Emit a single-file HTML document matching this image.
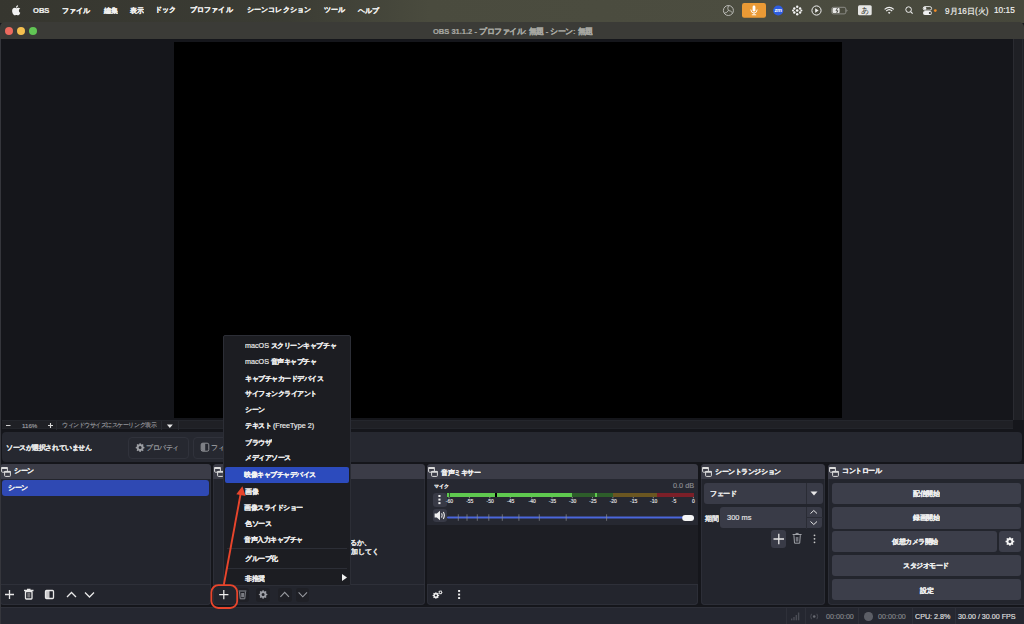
<!DOCTYPE html>
<html lang="ja"><head><meta charset="utf-8">
<style>
*{box-sizing:border-box;margin:0;padding:0}
html,body{width:1024px;height:624px;overflow:hidden;background:#15161b;font-family:"Liberation Sans",sans-serif;color:#e6e6e6}
.a{position:absolute}
.T{position:absolute;white-space:nowrap;line-height:1;font-size:20px;transform-origin:0 0}
.dock{position:absolute;background:#23252d;border-radius:4px;overflow:hidden;box-shadow:inset 0 0 0 1px #2c2e37}
.dh{position:absolute;left:0;top:0;right:0;height:15px;background:#3b3c47}
.btn{position:absolute;background:#3c3e4a;border-radius:3px}
.ib{position:absolute;background:#2c2e37;border-radius:3px}
.sep{position:absolute;background:#282a30}
</style></head><body>
<div class="a" style="left:0;top:0;width:1024px;height:23px;background:linear-gradient(90deg,#36362f 0%,#3b3c34 28%,#4a4b3e 42%,#4c4d40 75%,#46473b 100%)"></div>
<svg class="a" style="left:12px;top:5px" width="9" height="11" viewBox="0 0 170 200"><path fill="#f2f2f2" d="M150 68c-1 1-20 12-20 36 0 28 25 38 26 38 0 1-4 14-13 27-8 11-16 23-29 23s-16-8-31-8c-15 0-20 8-32 8s-21-11-30-24C10 153 2 128 2 105c0-38 25-58 49-58 13 0 24 9 32 9 8 0 20-9 35-9 6 0 26 1 39 21zM104 33c6-7 11-17 11-28 0-1 0-3-1-4-10 0-22 7-29 15-6 6-11 17-11 27 0 2 0 3 1 4h3c9 0 20-6 26-14z"/></svg>
<svg class="a" style="left:715px;top:0" width="230" height="22" viewBox="715 0 230 22">
<circle cx="728.4" cy="10.5" r="5" fill="none" stroke="#c4c4c0" stroke-width="0.9"/>
<g fill="none" stroke="#c4c4c0" stroke-width="0.85"><path d="M728.4 10.5Q727 8.3 728.6 5.6"/><path d="M728.4 10.5Q731 10.6 732.6 13"/><path d="M728.4 10.5Q727.3 12.8 724.3 13.2"/></g>
<rect x="742" y="3" width="24" height="14.7" rx="2.2" fill="#eb9a35"/>
<rect x="752.6" y="5.6" width="2.8" height="6" rx="1.4" fill="#fff"/>
<path d="M750.8 9.5Q751 13 754 13Q757 13 757.2 9.5M754 13V14.8M751.8 14.8H756.2" stroke="#fff" stroke-width="0.9" fill="none"/>
<circle cx="778.2" cy="10.5" r="5.1" fill="#2e5de0"/>
<text x="778.2" y="12.4" font-size="5.6" font-family="Liberation Sans" font-weight="bold" fill="#fff" text-anchor="middle" letter-spacing="-0.3">zm</text>
<g fill="#f4f4f4"><circle cx="797.2" cy="10.5" r="1.3"/><circle cx="794.3" cy="8.5" r="1.2"/><circle cx="800.1" cy="8.5" r="1.2"/><circle cx="794.3" cy="12.5" r="1.2"/><circle cx="800.1" cy="12.5" r="1.2"/><circle cx="797.2" cy="6.8" r="1.2"/><circle cx="797.2" cy="14.2" r="1.2"/><circle cx="793" cy="10.5" r="1"/><circle cx="801.4" cy="10.5" r="1"/></g>
<circle cx="816.5" cy="10.5" r="4.6" fill="none" stroke="#f0f0f0" stroke-width="1"/>
<path d="M815.2 8.3V12.7L818.6 10.5Z" fill="#f0f0f0"/>
<rect x="831.8" y="7.3" width="14" height="6.6" rx="1.6" fill="none" stroke="#9c9c98" stroke-width="0.8"/>
<rect x="832.6" y="8.1" width="7" height="5" rx="0.8" fill="#e8e8e6"/>
<path d="M846.5 9.2V12L847.6 10.6Z" fill="#9c9c98"/>
<path d="M837.5 8L836 10.8H838L836.6 13" stroke="#33332e" stroke-width="0.8" fill="none"/>
<rect x="858" y="5.3" width="13.7" height="10" rx="1.5" fill="#e6e6e4"/>
<text x="864.85" y="13.3" font-size="8" fill="#33332e" text-anchor="middle">あ</text>
<path d="M884.6 9.4Q889.2 5.2 893.8 9.4" stroke="#f0f0f0" stroke-width="1.1" fill="none"/>
<path d="M886.2 11Q889.2 8.3 892.2 11" stroke="#f0f0f0" stroke-width="1.1" fill="none"/>
<path d="M887.9 12.6Q889.2 11.4 890.5 12.6L889.2 14Z" fill="#f0f0f0"/>
<circle cx="908.6" cy="9.6" r="2.8" fill="none" stroke="#f0f0f0" stroke-width="1"/>
<path d="M910.6 11.6L912.6 13.6" stroke="#f0f0f0" stroke-width="1.2"/>
<rect x="923.2" y="6.6" width="8.4" height="3.6" rx="1.8" fill="none" stroke="#f0f0f0" stroke-width="0.9"/>
<circle cx="925" cy="8.4" r="1.3" fill="#f0f0f0"/>
<rect x="923" y="11.1" width="8.8" height="3.8" rx="1.9" fill="#f0f0f0"/>
<circle cx="929.9" cy="13" r="1.1" fill="#33332e"/>
<circle cx="935.3" cy="10.6" r="1.4" fill="#f08c28"/>
</svg>
<div class="T" style="left:32.54px;top:6.57px;transform:scale(0.3791);font-weight:bold;color:#f0f0ee;-webkit-text-stroke:0.55px #f0f0ee">OBS</div>
<div class="T" style="left:61.80px;top:6.53px;transform:scale(0.3550);font-weight:bold;color:#f0f0ee;-webkit-text-stroke:0.55px #f0f0ee">ファイル</div>
<div class="T" style="left:104.20px;top:6.78px;transform:scale(0.3400);font-weight:bold;color:#f0f0ee;-webkit-text-stroke:0.55px #f0f0ee">編集</div>
<div class="T" style="left:130.00px;top:6.78px;transform:scale(0.3400);font-weight:bold;color:#f0f0ee;-webkit-text-stroke:0.55px #f0f0ee">表示</div>
<div class="T" style="left:154.68px;top:6.23px;transform:scale(0.3600);font-weight:bold;color:#f0f0ee;-webkit-text-stroke:0.55px #f0f0ee">ドック</div>
<div class="T" style="left:190.00px;top:6.23px;transform:scale(0.3550);font-weight:bold;color:#f0f0ee;-webkit-text-stroke:0.55px #f0f0ee">プロファイル</div>
<div class="T" style="left:246.98px;top:6.23px;transform:scale(0.3550);font-weight:bold;color:#f0f0ee;-webkit-text-stroke:0.55px #f0f0ee">シーンコレクション</div>
<div class="T" style="left:324.00px;top:5.83px;transform:scale(0.3600);font-weight:bold;color:#f0f0ee;-webkit-text-stroke:0.55px #f0f0ee">ツール</div>
<div class="T" style="left:358.00px;top:6.83px;transform:scale(0.3550);font-weight:bold;color:#f0f0ee;-webkit-text-stroke:0.55px #f0f0ee">ヘルプ</div>
<div class="T" style="left:945.00px;top:6.88px;transform:scale(0.4076);font-weight:normal;color:#f0f0ee;-webkit-text-stroke:0.4px #f0f0ee">9月16日(火)</div>
<div class="T" style="left:994.30px;top:5.90px;transform:scale(0.4157);font-weight:normal;color:#f0f0ee;-webkit-text-stroke:0.4px #f0f0ee">10:15</div>
<div class="a" style="left:0;top:22px;width:1024px;height:17px;background:#3b3b37;border-radius:5px 5px 0 0"></div>
<div class="a" style="left:4.5px;top:26.5px;width:8px;height:8px;border-radius:50%;background:#ec6a5e"></div>
<div class="a" style="left:16.5px;top:26.5px;width:8px;height:8px;border-radius:50%;background:#f4bf4f"></div>
<div class="a" style="left:28.5px;top:26.5px;width:8px;height:8px;border-radius:50%;background:#61c554"></div>
<div class="T" style="left:432.61px;top:27.78px;transform:scale(0.3761);font-weight:bold;color:#a8a8a2;-webkit-text-stroke:0.55px #a8a8a2">OBS 31.1.2 - プロファイル: 無題 - シーン: 無題</div>
<div class="a" style="left:174px;top:42px;width:667.8px;height:375.7px;background:#000"></div>
<div class="a" style="left:1012.8px;top:39px;width:11.2px;height:381px;background:#1f2025;border-left:1px solid #2a2b31"></div><div class="a" style="left:1021.8px;top:39px;width:1px;height:381px;background:#282a30"></div>
<div class="a" style="left:2px;top:419.9px;width:1011px;height:9.6px;background:#1f2025;border-top:1.5px solid #24262c;border-bottom:1.5px solid #23252b"></div>
<svg class="a" style="left:0;top:418px" width="200" height="14" viewBox="0 418 200 14">
<path d="M6 425.5H10.5" stroke="#d0d0d0" stroke-width="1"/>
<path d="M48 425.5H53M50.5 423V428" stroke="#d8d8d8" stroke-width="1.1"/>
<path d="M166.9 424.5H172.8L169.85 428Z" fill="#e8e8e8"/>
</svg>
<div class="sep" style="left:56px;top:421px;width:1px;height:9px"></div>
<div class="sep" style="left:161px;top:421px;width:1px;height:9px"></div>
<div class="sep" style="left:177.5px;top:421px;width:1px;height:9px"></div>
<div class="a" style="left:2px;top:432.4px;width:1020px;height:29.2px;background:#262830;border-radius:4px"></div>
<div class="a" style="left:127.5px;top:436.5px;width:61.5px;height:22px;border:1px solid #30323b;border-radius:4px"></div>
<div class="a" style="left:192.5px;top:436.5px;width:61.5px;height:22px;border:1px solid #30323b;border-radius:4px"></div>
<svg class="a" style="left:130px;top:438px" width="90" height="18" viewBox="130 438 90 18">
<path fill-rule="evenodd" fill="#9c9ea3" d="M143.50 446.77 L144.45 446.96 L144.45 448.24 L143.50 448.43 L143.09 449.42 L143.63 450.23 L142.73 451.13 L141.92 450.59 L140.93 451.00 L140.74 451.95 L139.46 451.95 L139.27 451.00 L138.28 450.59 L137.47 451.13 L136.57 450.23 L137.11 449.42 L136.70 448.43 L135.75 448.24 L135.75 446.96 L136.70 446.77 L137.11 445.78 L136.57 444.97 L137.47 444.07 L138.28 444.61 L139.27 444.20 L139.46 443.25 L140.74 443.25 L140.93 444.20 L141.92 444.61 L142.73 444.07 L143.63 444.97 L143.09 445.78Z M138.60 447.60 a1.50 1.50 0 1 0 3.00 0 a1.50 1.50 0 1 0 -3.00 0Z"/>
<rect x="201.2" y="443.2" width="7.6" height="8" rx="1.6" fill="none" stroke="#9c9ea3" stroke-width="0.9"/>
<rect x="201.6" y="443.6" width="3.6" height="7.2" fill="#9c9ea3" opacity="0.75"/>
</svg>
<div class="T" style="left:22.29px;top:422.99px;transform:scale(0.3085);font-weight:normal;color:#a0a1a6;-webkit-text-stroke:0.4px #a0a1a6">116%</div>
<div class="T" style="left:62.20px;top:422.38px;transform:scale(0.2768);font-weight:normal;color:#a0a1a6;-webkit-text-stroke:0.4px #a0a1a6">ウィンドウサイズにスケーリング表示</div>
<div class="T" style="left:5.82px;top:443.92px;transform:scale(0.3290);font-weight:bold;color:#e8e8e8;-webkit-text-stroke:0.55px #e8e8e8">ソースが選択されていません</div>
<div class="T" style="left:146.25px;top:444.44px;transform:scale(0.3264);font-weight:normal;color:#a8aaae;-webkit-text-stroke:0.4px #a8aaae">プロパティ</div>
<div class="T" style="left:211.00px;top:444.03px;transform:scale(0.3352);font-weight:normal;color:#a8aaae;-webkit-text-stroke:0.4px #a8aaae">フィルタ</div>
<div class="dock" style="left:0;top:464px;width:211px;height:141px">
  <div class="dh"></div>
  <div class="a" style="left:2px;top:15.5px;width:207px;height:16.5px;background:#2f49b3;border-radius:3px"></div>
  <div class="a" style="left:0;top:120px;width:211px;height:1px;background:#2e3039"></div>
</div>
<div class="dock" style="left:213px;top:464px;width:212px;height:141px">
  <div class="dh"></div>
  <div class="a" style="left:0;top:120px;width:212px;height:1px;background:#2e3039"></div>
</div>
<div class="dock" style="left:427px;top:464px;width:271px;height:141px">
  <div class="dh"></div>
  <div class="a" style="left:0;top:15px;width:271px;height:46px;background:#262831"></div>
  <div class="a" style="left:0;top:61px;width:271px;height:60px;background:#1d1e24"></div>
  <div class="a" style="left:0;top:120px;width:271px;height:1px;background:#2e3039"></div>
</div>
<div class="dock" style="left:701px;top:464px;width:124px;height:141px">
  <div class="dh"></div>
</div>
<div class="dock" style="left:828px;top:464px;width:200px;height:141px">
  <div class="dh"></div>
</div>
<svg class="a" style="left:0px;top:466px" width="12" height="12" viewBox="0 0 12 12"><rect x="1.6" y="1.6" width="5.8" height="4.6" rx="0.8" fill="none" stroke="#dcdcdc" stroke-width="1"/><rect x="1.1" y="1.1" width="6.8" height="1.9" rx="0.8" fill="#dcdcdc"/><rect x="4.6" y="5.4" width="5.8" height="5" rx="0.8" fill="#3b3c47" stroke="#dcdcdc" stroke-width="1"/><rect x="4.1" y="4.9" width="6.8" height="1.9" rx="0.8" fill="#dcdcdc"/></svg><svg class="a" style="left:213px;top:466px" width="12" height="12" viewBox="0 0 12 12"><rect x="1.6" y="1.6" width="5.8" height="4.6" rx="0.8" fill="none" stroke="#dcdcdc" stroke-width="1"/><rect x="1.1" y="1.1" width="6.8" height="1.9" rx="0.8" fill="#dcdcdc"/><rect x="4.6" y="5.4" width="5.8" height="5" rx="0.8" fill="#3b3c47" stroke="#dcdcdc" stroke-width="1"/><rect x="4.1" y="4.9" width="6.8" height="1.9" rx="0.8" fill="#dcdcdc"/></svg><svg class="a" style="left:427px;top:466px" width="12" height="12" viewBox="0 0 12 12"><rect x="1.6" y="1.6" width="5.8" height="4.6" rx="0.8" fill="none" stroke="#dcdcdc" stroke-width="1"/><rect x="1.1" y="1.1" width="6.8" height="1.9" rx="0.8" fill="#dcdcdc"/><rect x="4.6" y="5.4" width="5.8" height="5" rx="0.8" fill="#3b3c47" stroke="#dcdcdc" stroke-width="1"/><rect x="4.1" y="4.9" width="6.8" height="1.9" rx="0.8" fill="#dcdcdc"/></svg><svg class="a" style="left:701px;top:466px" width="12" height="12" viewBox="0 0 12 12"><rect x="1.6" y="1.6" width="5.8" height="4.6" rx="0.8" fill="none" stroke="#dcdcdc" stroke-width="1"/><rect x="1.1" y="1.1" width="6.8" height="1.9" rx="0.8" fill="#dcdcdc"/><rect x="4.6" y="5.4" width="5.8" height="5" rx="0.8" fill="#3b3c47" stroke="#dcdcdc" stroke-width="1"/><rect x="4.1" y="4.9" width="6.8" height="1.9" rx="0.8" fill="#dcdcdc"/></svg><svg class="a" style="left:828px;top:466px" width="12" height="12" viewBox="0 0 12 12"><rect x="1.6" y="1.6" width="5.8" height="4.6" rx="0.8" fill="none" stroke="#dcdcdc" stroke-width="1"/><rect x="1.1" y="1.1" width="6.8" height="1.9" rx="0.8" fill="#dcdcdc"/><rect x="4.6" y="5.4" width="5.8" height="5" rx="0.8" fill="#3b3c47" stroke="#dcdcdc" stroke-width="1"/><rect x="4.1" y="4.9" width="6.8" height="1.9" rx="0.8" fill="#dcdcdc"/></svg>
<svg class="a" style="left:0;top:585px" width="211" height="20" viewBox="0 585 211 20">
<g stroke="#e8e8e8" stroke-width="1.3" fill="none">
<path d="M5 594.5H14M9.5 590V599"/>
<rect x="25.5" y="591.5" width="6.5" height="7.5" rx="0.8"/><path d="M24 590.5H33.5M27 589.5H30.5"/>
<rect x="45.5" y="590.5" width="8" height="8" rx="1"/>
<path d="M67 597L71.5 592.5L76 597"/><path d="M85 592.5L89.5 597L94 592.5"/>
</g>
<rect x="46" y="591" width="3.5" height="7" fill="#e8e8e8" opacity="0.85"/>
<rect x="27.3" y="593" width="3" height="4.5" fill="#aaa" opacity="0.6"/>
</svg>
<div class="ib" style="left:237.5px;top:588px;width:11px;height:13.5px;background:#1f2026"></div>
<div class="ib" style="left:256px;top:588px;width:14px;height:13.5px;background:#1f2026"></div>
<div class="ib" style="left:278px;top:588px;width:13.7px;height:13.5px;background:#1f2026"></div>
<div class="ib" style="left:296.1px;top:588px;width:13.4px;height:13.5px;background:#1f2026"></div>
<svg class="a" style="left:210px;top:585px" width="110" height="20" viewBox="210 585 110 20">
<path d="M219.2 594.6H228.4M223.8 590V599.2" stroke="#f0f0f0" stroke-width="1.2" fill="none"/>
<g stroke="#8a8c92" stroke-width="1" fill="none">
<path d="M239.6 591.6L240.2 598.8H244.8L245.4 591.6"/><path d="M238.6 591H246.4"/>
</g>
<rect x="241.2" y="593" width="2.8" height="4.2" fill="#7a7c82"/>
<path fill-rule="evenodd" fill="#9c9ea4" d="M266.40 593.69 L267.35 593.88 L267.35 595.12 L266.40 595.31 L266.01 596.27 L266.55 597.07 L265.67 597.95 L264.87 597.41 L263.91 597.80 L263.72 598.75 L262.48 598.75 L262.29 597.80 L261.33 597.41 L260.53 597.95 L259.65 597.07 L260.19 596.27 L259.80 595.31 L258.85 595.12 L258.85 593.88 L259.80 593.69 L260.19 592.73 L259.65 591.93 L260.53 591.05 L261.33 591.59 L262.29 591.20 L262.48 590.25 L263.72 590.25 L263.91 591.20 L264.87 591.59 L265.67 591.05 L266.55 591.93 L266.01 592.73Z M261.60 594.50 a1.50 1.50 0 1 0 3.00 0 a1.50 1.50 0 1 0 -3.00 0Z"/>
<g stroke="#9a9ca2" stroke-width="1.1" fill="none">
<path d="M280.4 596.8L284.7 592.3L289 596.8"/><path d="M298.6 592.4L302.8 596.8L307 592.4"/>
</g>
</svg>
<div class="a" style="left:447px;top:492.8px;width:125.3px;height:4.2px;background:#5fc94f"></div>
<div class="a" style="left:572.3px;top:492.8px;width:40.7px;height:4.2px;background:#2d5d2a"></div>
<div class="a" style="left:595px;top:492.8px;width:2px;height:4.2px;background:#5fc94f"></div>
<div class="a" style="left:613px;top:492.8px;width:44.1px;height:4.2px;background:#6b5621"></div>
<div class="a" style="left:657.1px;top:492.8px;width:36.9px;height:4.2px;background:#7b1f28"></div>
<div class="a" style="left:448.8px;top:492.8px;width:1.2px;height:4.2px;background:#2d5d2a"></div>
<div class="a" style="left:495px;top:492.8px;width:1.5px;height:4.2px;background:#000"></div>
<div class="ib" style="left:432.5px;top:492.8px;width:14px;height:13.8px;background:#383a46"></div>
<div class="ib" style="left:432.5px;top:508.5px;width:14px;height:13.8px;background:#383a46"></div>
<svg class="a" style="left:427px;top:490px" width="271" height="40" viewBox="427 490 271 40">
<g fill="#f0f0f0"><rect x="438.4" y="495" width="2.1" height="2"/><rect x="438.4" y="498.6" width="2.1" height="2"/><rect x="438.4" y="502.1" width="2.1" height="2"/></g>
<path d="M434.6 513.6H436.8L440 510.8V520.3L436.8 517.5H434.6Z" fill="#f0f0f0"/>
<path d="M441.6 513.3Q442.9 515.4 441.6 517.6M443.3 512Q445.4 515.4 443.3 518.9" stroke="#f0f0f0" stroke-width="1.1" fill="none"/>
<rect x="447" y="516.6" width="247" height="2" rx="1" fill="#4a66dc"/>
<path d="M458.3 514.3V520.8M467.0 514.3V520.8M477.3 514.3V520.8M488.8 514.3V520.8M502.3 514.3V520.8M518.9 514.3V520.8M539.3 514.3V520.8M566.2 514.3V520.8M606.6 514.3V520.8" stroke="#8a8c94" stroke-width="0.7"/>
<path d="M449.0 497V498.3M469.4 497V498.3M489.8 497V498.3M510.3 497V498.3M531.7 497V498.3M552.0 497V498.3M572.3 497V498.3M592.5 497V498.3M612.9 497V498.3M633.3 497V498.3M653.3 497V498.3M673.6 497V498.3M693.4 497V498.3" stroke="#c8c8c8" stroke-width="0.6"/>
<rect x="682.2" y="514.9" width="11.8" height="6.2" rx="3" fill="#f6f6f6"/>
</svg>
<div class="a" style="left:447px;top:498.8px;font-size:5px;line-height:1;white-space:nowrap;color:#e4e4e4;width:250px;-webkit-text-stroke:0.15px #e4e4e4"><span style="position:absolute;left:-5.6px;width:16px;text-align:center">-60</span><span style="position:absolute;left:14.8px;width:16px;text-align:center">-55</span><span style="position:absolute;left:35.2px;width:16px;text-align:center">-50</span><span style="position:absolute;left:55.7px;width:16px;text-align:center">-45</span><span style="position:absolute;left:77.1px;width:16px;text-align:center">-40</span><span style="position:absolute;left:97.4px;width:16px;text-align:center">-35</span><span style="position:absolute;left:117.7px;width:16px;text-align:center">-30</span><span style="position:absolute;left:137.9px;width:16px;text-align:center">-25</span><span style="position:absolute;left:158.3px;width:16px;text-align:center">-20</span><span style="position:absolute;left:178.7px;width:16px;text-align:center">-15</span><span style="position:absolute;left:198.7px;width:16px;text-align:center">-10</span><span style="position:absolute;left:219.0px;width:16px;text-align:center">-5</span><span style="position:absolute;left:238.4px;width:16px;text-align:center">0</span></div>
<svg class="a" style="left:427px;top:585px" width="50" height="20" viewBox="427 585 50 20">
<path fill-rule="evenodd" fill="#f0f0f0" d="M438.32 594.86 L439.16 594.96 L439.16 596.04 L438.32 596.14 L438.06 596.76 L438.58 597.42 L437.82 598.18 L437.16 597.66 L436.54 597.92 L436.44 598.76 L435.36 598.76 L435.26 597.92 L434.64 597.66 L433.98 598.18 L433.22 597.42 L433.74 596.76 L433.48 596.14 L432.64 596.04 L432.64 594.96 L433.48 594.86 L433.74 594.24 L433.22 593.58 L433.98 592.82 L434.64 593.34 L435.26 593.08 L435.36 592.24 L436.44 592.24 L436.54 593.08 L437.16 593.34 L437.82 592.82 L438.58 593.58 L438.06 594.24Z M434.80 595.50 a1.10 1.10 0 1 0 2.20 0 a1.10 1.10 0 1 0 -2.20 0Z"/>
<path fill-rule="evenodd" fill="#f0f0f0" d="M441.93 591.93 L442.46 592.01 L442.46 592.79 L441.93 592.87 L441.72 593.31 L441.99 593.77 L441.38 594.26 L440.99 593.89 L440.51 594.00 L440.32 594.50 L439.56 594.32 L439.60 593.79 L439.22 593.48 L438.71 593.65 L438.37 592.94 L438.82 592.64 L438.82 592.16 L438.37 591.86 L438.71 591.15 L439.22 591.32 L439.60 591.01 L439.56 590.48 L440.32 590.30 L440.51 590.80 L440.99 590.91 L441.38 590.54 L441.99 591.03 L441.72 591.49Z M439.60 592.40 a0.80 0.80 0 1 0 1.60 0 a0.80 0.80 0 1 0 -1.60 0Z"/>
<g fill="#f0f0f0"><rect x="458.1" y="590" width="2" height="1.9"/><rect x="458.1" y="593.6" width="2" height="1.9"/><rect x="458.1" y="597.1" width="2" height="1.9"/></g>
</svg>
<div class="btn" style="left:704px;top:482.5px;width:119px;height:21.5px;background:#393b47"></div>
<div class="a" style="left:805.5px;top:482.5px;width:1px;height:21.5px;background:#2a2c35"></div>
<svg class="a" style="left:810px;top:491px" width="8" height="5" viewBox="0 0 8 5"><path d="M0.5 0.5H7.5L4 4.5Z" fill="#e8e8e8"/></svg>
<div class="btn" style="left:720.4px;top:506.8px;width:101.6px;height:21.4px;background:#393b47"></div>
<div class="a" style="left:805.5px;top:506.5px;width:1px;height:22px;background:#2a2c35"></div>
<div class="a" style="left:806px;top:517px;width:17px;height:1px;background:#2a2c35"></div>
<svg class="a" style="left:806px;top:507px" width="17" height="21" viewBox="806 507 17 21">
<g stroke="#e8e8e8" stroke-width="1" fill="none"><path d="M810.5 513.5L813.8 510.5L817 513.5"/><path d="M810.5 521.5L813.8 524.5L817 521.5"/></g>
</svg>
<div class="btn" style="left:771px;top:529.5px;width:15px;height:18.7px;background:#393b47"></div>
<svg class="a" style="left:770px;top:529px" width="55" height="20" viewBox="770 529 55 20">
<path d="M773.5 539H784M778.8 533.8V544.2" stroke="#e8e8e8" stroke-width="1.3"/>
<g stroke="#a0a2a8" stroke-width="1" fill="none"><path d="M793.9 535.2L794.5 543.2H799.7L800.3 535.2"/><path d="M792.6 534.5H801.6M795.6 533.4H798.6"/></g><rect x="795.8" y="537" width="2.6" height="4.6" fill="#6e7078"/>
<g fill="#c8c8c8"><circle cx="814.5" cy="535.3" r="0.9"/><circle cx="814.5" cy="538.8" r="0.9"/><circle cx="814.5" cy="542.3" r="0.9"/></g>
</svg>
<div class="btn" style="left:832px;top:482.5px;width:188.5px;height:21.5px"></div>
<div class="btn" style="left:832px;top:507px;width:188.5px;height:21.5px"></div>
<div class="btn" style="left:832px;top:531px;width:164.5px;height:21px"></div>
<div class="btn" style="left:999px;top:530.7px;width:21.7px;height:21.3px"></div>
<svg class="a" style="left:999px;top:530px" width="22" height="23" viewBox="999 530 22 23"><path fill-rule="evenodd" fill="#f4f4f4" d="M1013.30 540.67 L1014.25 540.86 L1014.25 542.14 L1013.30 542.33 L1012.89 543.32 L1013.43 544.13 L1012.53 545.03 L1011.72 544.49 L1010.73 544.90 L1010.54 545.85 L1009.26 545.85 L1009.07 544.90 L1008.08 544.49 L1007.27 545.03 L1006.37 544.13 L1006.91 543.32 L1006.50 542.33 L1005.55 542.14 L1005.55 540.86 L1006.50 540.67 L1006.91 539.68 L1006.37 538.87 L1007.27 537.97 L1008.08 538.51 L1009.07 538.10 L1009.26 537.15 L1010.54 537.15 L1010.73 538.10 L1011.72 538.51 L1012.53 537.97 L1013.43 538.87 L1012.89 539.68Z M1008.40 541.50 a1.50 1.50 0 1 0 3.00 0 a1.50 1.50 0 1 0 -3.00 0Z"/></svg>
<div class="btn" style="left:832px;top:555px;width:188.5px;height:21px"></div>
<div class="btn" style="left:832px;top:579px;width:188.5px;height:20.5px"></div>
<div class="T" style="left:13.82px;top:467.36px;transform:scale(0.3290);font-weight:bold;color:#f0f0f0;-webkit-text-stroke:0.55px #f0f0f0">シーン</div>
<div class="T" style="left:226.22px;top:468.16px;transform:scale(0.3340);font-weight:bold;color:#f0f0f0;-webkit-text-stroke:0.55px #f0f0f0">ソース</div>
<div class="T" style="left:440.62px;top:468.65px;transform:scale(0.3290);font-weight:bold;color:#f0f0f0;-webkit-text-stroke:0.55px #f0f0f0">音声ミキサー</div>
<div class="T" style="left:714.90px;top:467.78px;transform:scale(0.3290);font-weight:bold;color:#f0f0f0;-webkit-text-stroke:0.55px #f0f0f0">シーントランジション</div>
<div class="T" style="left:841.63px;top:467.35px;transform:scale(0.3290);font-weight:bold;color:#f0f0f0;-webkit-text-stroke:0.55px #f0f0f0">コントロール</div>
<div class="T" style="left:8.23px;top:483.55px;transform:scale(0.3290);font-weight:bold;color:#f0f0f0;-webkit-text-stroke:0.55px #f0f0f0">シーン</div>
<div class="T" style="left:350.05px;top:538.56px;transform:scale(0.3550);font-weight:bold;color:#e0e0e0;-webkit-text-stroke:0.55px #e0e0e0">るか、</div>
<div class="T" style="left:351.00px;top:548.28px;transform:scale(0.3550);font-weight:bold;color:#e0e0e0;-webkit-text-stroke:0.55px #e0e0e0">加してく</div>
<div class="T" style="left:433.63px;top:483.80px;transform:scale(0.2576);font-weight:bold;color:#e8e8e8;-webkit-text-stroke:0.55px #e8e8e8">マイク</div>
<div class="T" style="left:672.79px;top:481.95px;transform:scale(0.3656);font-weight:normal;color:#8c8d92;-webkit-text-stroke:0.4px #8c8d92">0.0 dB</div>
<div class="T" style="left:710.00px;top:489.75px;transform:scale(0.3290);font-weight:bold;color:#e8e8e8;-webkit-text-stroke:0.55px #e8e8e8">フェード</div>
<div class="T" style="left:705.40px;top:514.65px;transform:scale(0.3290);font-weight:bold;color:#e0e0e0;-webkit-text-stroke:0.55px #e0e0e0">期間</div>
<div class="T" style="left:726.75px;top:514.10px;transform:scale(0.3716);font-weight:normal;color:#e8e8e8;-webkit-text-stroke:0.4px #e8e8e8">300 ms</div>
<div class="T" style="left:912.80px;top:490.33px;transform:scale(0.3290);font-weight:bold;color:#f0f0f0;-webkit-text-stroke:0.55px #f0f0f0">配信開始</div>
<div class="T" style="left:912.80px;top:514.49px;transform:scale(0.3290);font-weight:bold;color:#f0f0f0;-webkit-text-stroke:0.55px #f0f0f0">録画開始</div>
<div class="T" style="left:891.60px;top:538.11px;transform:scale(0.3290);font-weight:bold;color:#f0f0f0;-webkit-text-stroke:0.55px #f0f0f0">仮想カメラ開始</div>
<div class="T" style="left:903.19px;top:561.58px;transform:scale(0.3290);font-weight:bold;color:#f0f0f0;-webkit-text-stroke:0.55px #f0f0f0">スタジオモード</div>
<div class="T" style="left:919.88px;top:586.65px;transform:scale(0.3290);font-weight:bold;color:#f0f0f0;-webkit-text-stroke:0.55px #f0f0f0">設定</div>
<div class="a" style="left:0;top:606.5px;width:1024px;height:17.5px;background:#252730;border-top:1px solid #2e3039"></div>
<div class="a" style="left:786px;top:607px;width:1px;height:17px;background:#2e3039"></div>
<div class="a" style="left:805px;top:607px;width:1px;height:17px;background:#2e3039"></div>
<div class="a" style="left:858px;top:607px;width:1px;height:17px;background:#2e3039"></div>
<div class="a" style="left:911.5px;top:607px;width:1px;height:17px;background:#2e3039"></div>
<div class="a" style="left:955px;top:607px;width:1px;height:17px;background:#2e3039"></div>
<svg class="a" style="left:790px;top:610px" width="12" height="12" viewBox="790 610 12 12">
<g fill="#4a4c55"><rect x="791" y="618.5" width="1.4" height="1.8"/><rect x="793.3" y="617" width="1.4" height="3.3"/><rect x="795.6" y="615" width="1.4" height="5.3"/><rect x="797.9" y="612.5" width="1.4" height="7.8"/></g>
</svg>
<svg class="a" style="left:808px;top:611px" width="12" height="11" viewBox="808 611 12 11">
<circle cx="814.2" cy="616.5" r="1.3" fill="#6a6c74"/>
<path d="M811.5 613.8Q810 616.5 811.5 619.2M816.9 613.8Q818.4 616.5 816.9 619.2" stroke="#4e5058" stroke-width="0.9" fill="none"/>
</svg>
<div class="a" style="left:864px;top:612px;width:8.5px;height:8.5px;border-radius:50%;background:#5c5e66"></div>
<div class="T" style="left:825.52px;top:613.06px;transform:scale(0.3575);font-weight:normal;color:#86878c;-webkit-text-stroke:0.4px #86878c">00:00:00</div>
<div class="T" style="left:878.07px;top:613.06px;transform:scale(0.3575);font-weight:normal;color:#86878c;-webkit-text-stroke:0.4px #86878c">00:00:00</div>
<div class="T" style="left:915.22px;top:613.10px;transform:scale(0.3575);font-weight:normal;color:#e0e0e0;-webkit-text-stroke:0.4px #e0e0e0">CPU: 2.8%</div>
<div class="T" style="left:958.25px;top:613.07px;transform:scale(0.3575);font-weight:normal;color:#e0e0e0;-webkit-text-stroke:0.4px #e0e0e0">30.00 / 30.00 FPS</div>
<div class="a" style="left:223px;top:335px;width:128px;height:251px;background:#1c1d22;border:1px solid #2c2e36;border-radius:2px"></div>
<div class="a" style="left:225px;top:467px;width:124px;height:15.5px;background:#2c4bbd;border-radius:2px"></div>
<div class="a" style="left:227px;top:548px;width:120px;height:1px;background:#2c2e36"></div>
<div class="a" style="left:227px;top:567.5px;width:120px;height:1px;background:#2c2e36"></div>
<svg class="a" style="left:342px;top:574px" width="5" height="7" viewBox="0 0 5 7"><path d="M0 0L5 3.5L0 7Z" fill="#f0f0f0"/></svg>
<div class="T" style="left:244.78px;top:341.82px;transform:scale(0.3265);font-weight:bold;color:#ececec;-webkit-text-stroke:0.55px #ececec"><span style="font-size:1.1em;font-weight:normal;position:relative;top:-1px">macOS</span> スクリーンキャプチャ</div>
<div class="T" style="left:244.79px;top:358.13px;transform:scale(0.3265);font-weight:bold;color:#ececec;-webkit-text-stroke:0.55px #ececec"><span style="font-size:1.1em;font-weight:normal;position:relative;top:-1px">macOS</span> 音声キャプチャ</div>
<div class="T" style="left:244.81px;top:374.53px;transform:scale(0.3265);font-weight:bold;color:#ececec;-webkit-text-stroke:0.55px #ececec">キャプチャカードデバイス</div>
<div class="T" style="left:244.80px;top:389.92px;transform:scale(0.3265);font-weight:bold;color:#ececec;-webkit-text-stroke:0.55px #ececec">サイフォンクライアント</div>
<div class="T" style="left:244.78px;top:405.71px;transform:scale(0.3265);font-weight:bold;color:#ececec;-webkit-text-stroke:0.55px #ececec">シーン</div>
<div class="T" style="left:244.82px;top:422.15px;transform:scale(0.3265);font-weight:bold;color:#ececec;-webkit-text-stroke:0.55px #ececec">テキスト <span style="font-size:1.1em;font-weight:normal;position:relative;top:-1px">(FreeType 2)</span></div>
<div class="T" style="left:244.84px;top:438.55px;transform:scale(0.3265);font-weight:bold;color:#ececec;-webkit-text-stroke:0.55px #ececec">ブラウザ</div>
<div class="T" style="left:244.68px;top:453.98px;transform:scale(0.3265);font-weight:bold;color:#ececec;-webkit-text-stroke:0.55px #ececec">メディアソース</div>
<div class="T" style="left:244.41px;top:471.10px;transform:scale(0.3265);font-weight:bold;color:#f4f4f4;-webkit-text-stroke:0.55px #f4f4f4">映像キャプチャデバイス</div>
<div class="T" style="left:245.38px;top:487.55px;transform:scale(0.3265);font-weight:bold;color:#ececec;-webkit-text-stroke:0.55px #ececec">画像</div>
<div class="T" style="left:244.40px;top:504.33px;transform:scale(0.3265);font-weight:bold;color:#ececec;-webkit-text-stroke:0.55px #ececec">画像スライドショー</div>
<div class="T" style="left:245.39px;top:520.15px;transform:scale(0.3265);font-weight:bold;color:#ececec;-webkit-text-stroke:0.55px #ececec">色ソース</div>
<div class="T" style="left:244.40px;top:535.94px;transform:scale(0.3265);font-weight:bold;color:#ececec;-webkit-text-stroke:0.55px #ececec">音声入力キャプチャ</div>
<div class="T" style="left:245.11px;top:554.68px;transform:scale(0.3265);font-weight:bold;color:#ececec;-webkit-text-stroke:0.55px #ececec">グループ化</div>
<div class="T" style="left:245.00px;top:574.70px;transform:scale(0.3265);font-weight:bold;color:#ececec;-webkit-text-stroke:0.55px #ececec">非推奨</div>
<svg class="a" style="left:200px;top:480px" width="60" height="135" viewBox="200 480 60 135">
<rect x="211.4" y="585.2" width="25.8" height="22.8" rx="7" fill="none" stroke="#e8452c" stroke-width="1.8"/>
<line x1="223.8" y1="585" x2="240.6" y2="494" stroke="#e8452c" stroke-width="1.9"/>
<path d="M242.4 486.2L236.3 494.3L245.6 495.9Z" fill="#e8452c"/>
</svg>
<div class="a" style="left:0;top:39px;width:1.2px;height:585px;background:#35363c"></div>

</body></html>
